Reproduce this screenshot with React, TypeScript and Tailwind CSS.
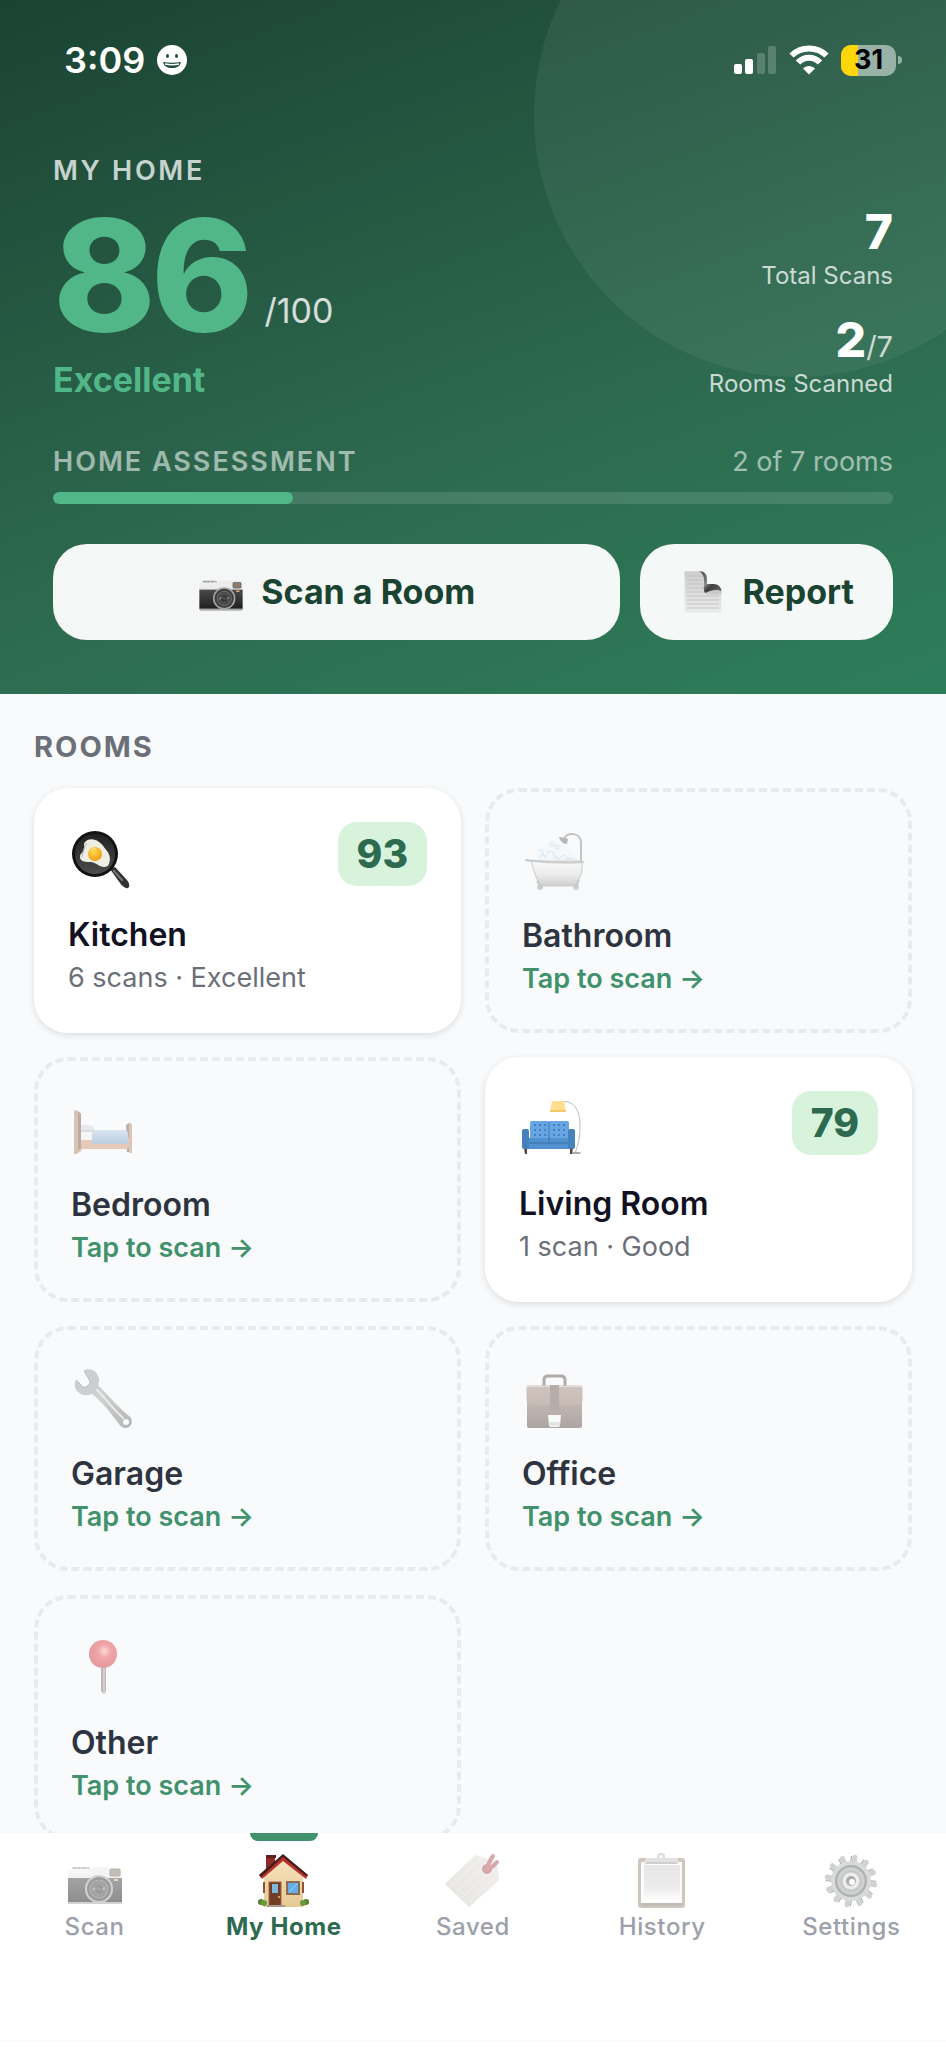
import type { ReactNode } from "react";

type IconProps = { className?: string };
type Icon = (props: IconProps) => ReactNode;

function CameraIcon({ className }: IconProps) {
  return (
    <svg viewBox="0 0 60 60" className={className} aria-hidden="true">
      <defs>
        <linearGradient id="camTop" x1="0" y1="0" x2="0" y2="1">
          <stop offset="0" stopColor="#f2f2f2" />
          <stop offset="1" stopColor="#c4c4c4" />
        </linearGradient>
        <linearGradient id="camBody" x1="0" y1="0" x2="0" y2="1">
          <stop offset="0" stopColor="#4a4a4a" />
          <stop offset="1" stopColor="#1f1f1f" />
        </linearGradient>
      </defs>
      <rect x="7" y="16" width="18" height="4" rx="1" fill="#b5b5b5" />
      <path d="M10 16v4M14 16v4M19 16v4" stroke="#777" strokeWidth="1" />
      <rect x="3" y="18" width="54" height="35" rx="2" fill="url(#camTop)" />
      <path d="M26 18l2-2h14l2 2v8H26z" fill="#ececec" />
      <rect x="3" y="27" width="54" height="24" fill="url(#camBody)" />
      <rect x="3" y="51" width="54" height="2" rx="1" fill="#a9a9a9" />
      <rect x="45" y="18" width="10" height="7" rx="1" fill="#8b7d6b" stroke="#666" strokeWidth="1" />
      <rect x="49" y="28" width="4" height="2" fill="#d9b46a" />
      <circle cx="34" cy="38" r="14" fill="#a6a6a6" />
      <circle cx="34" cy="38" r="12" fill="#3c3c3c" />
      <circle cx="34" cy="38" r="9" fill="#4c4c4c" stroke="#777" strokeWidth="1" />
      <path d="M28 39c2-2 4-3 6-1s4 0 6-1" stroke="#8f8f8f" strokeWidth="2" fill="none" />
      <circle cx="34" cy="38" r="4" fill="#2a2a2a" opacity=".6" />
    </svg>
  );
}

function PageIcon({ className }: IconProps) {
  return (
    <svg viewBox="0 0 60 60" className={className} aria-hidden="true">
      <defs>
        <linearGradient id="pageBg" x1="0" y1="0" x2="0" y2="1">
          <stop offset="0" stopColor="#cdcdcd" />
          <stop offset="1" stopColor="#ececec" />
        </linearGradient>
        <linearGradient id="pageFold" x1="0" y1="0" x2="1" y2="1">
          <stop offset="0" stopColor="#3a3a3a" />
          <stop offset=".45" stopColor="#8b8b8b" />
          <stop offset=".6" stopColor="#3f3f3f" />
          <stop offset="1" stopColor="#6a6a6a" />
        </linearGradient>
      </defs>
      <path d="M7 4h22c3 2 4 5 4 8v18h20v26H7z" fill="url(#pageBg)" />
      <path
        d="M10 10h19M10 15h20M10 20h20M10 25h21M10 30h24M10 35h40M10 40h40M10 45h40M10 50h40"
        stroke="#bcbcbc"
        strokeWidth="1"
      />
      <path d="M25 4c7 0 10 4 10 10v6h8c6 0 10 4 10 9-6-2-12-1-19 2-2 1-3-2-3-6 1-9 1-18-6-21z" fill="url(#pageFold)" />
      <path d="M34 31c7-4 13-4 19-2v4H34z" fill="#c9c9c9" />
    </svg>
  );
}

function PanIcon({ className }: IconProps) {
  return (
    <svg viewBox="0 0 64 64" className={className} aria-hidden="true">
      <defs>
        <radialGradient id="yolk" cx=".4" cy=".35" r=".7">
          <stop offset="0" stopColor="#ffd84a" />
          <stop offset="1" stopColor="#f29a12" />
        </radialGradient>
        <linearGradient id="panIn" x1="0" y1="0" x2="0" y2="1">
          <stop offset="0" stopColor="#222222" />
          <stop offset="1" stopColor="#4c4c4c" />
        </linearGradient>
      </defs>
      <path d="M42 43l5-2 11 12c4 4 4 8 2 9s-6-2-8-5z" fill="#333333" />
      <path d="M46 45l8 9" stroke="#777777" strokeWidth="2" strokeLinecap="round" />
      <circle cx="27" cy="28" r="23" fill="#121212" />
      <circle cx="27" cy="28" r="20" fill="url(#panIn)" />
      <path
        d="M17 16c4-4 10-3 14 0s4 4 8 9 3 10 2 13-5 4-9 2-6-4-11-4-9-1-9-5 3-4 4-7-1-6 1-8z"
        fill="#efeee2"
      />
      <path d="M14 31c1-6 2-10 5-14" stroke="#b5b3a5" strokeWidth="1" fill="none" />
      <circle cx="27" cy="28" r="7" fill="url(#yolk)" />
      <path d="M23 25c1-2 3-3 5-2" stroke="#fff1a8" strokeWidth="1" fill="none" strokeLinecap="round" />
    </svg>
  );
}

function BathIcon({ className }: IconProps) {
  return (
    <svg viewBox="0 0 64 64" className={className} aria-hidden="true">
      <defs>
        <linearGradient id="tub" x1="0" y1="0" x2="0" y2="1">
          <stop offset="0" stopColor="#f7f7f7" />
          <stop offset=".5" stopColor="#e2e2e2" />
          <stop offset="1" stopColor="#a5a5a5" />
        </linearGradient>
      </defs>
      <path d="M59 36V16c0-6-4-9-9-9-4 0-7 2-8 5" stroke="#909090" strokeWidth="2" fill="none" />
      <path d="M37 10c3 0 7 1 9 2l-1 5c-4 0-7-3-8-7z" fill="#777777" />
      <path d="M14 34c-1-6 3-12 9-14s7-4 12-4 9 3 12 7 8 5 9 12z" fill="#f2f8fc" />
      <g fill="none" stroke="#b2d3e6" strokeWidth="1">
        <path d="M15 23c3-1 6 1 6 4s3 3 4 0 4-4 6-1 1 6 5 6 3-5 6-4 2 5 6 4 5 1 7 2" />
        <path d="M18 31c0-4 5-4 6 0M31 32c0-4 5-4 6 0M44 33c1-3 5-3 6 0" />
        <circle cx="30" cy="17" r="2" />
        <circle cx="35" cy="20" r="2" />
      </g>
      <circle cx="18" cy="60" r="3" fill="#a5a5a5" />
      <circle cx="54" cy="60" r="3" fill="#a5a5a5" />
      <path d="M9 34h51c1 11-2 19-8 25H20C14 54 12 43 9 34z" fill="url(#tub)" stroke="#9c9c9c" strokeWidth="1" />
      <path d="M4 33c2 1 5 0 9 1 16 2 31 2 48 1" stroke="#9c9c9c" strokeWidth="2" fill="none" strokeLinecap="round" />
      <path d="M15 54l5 7M57 53l-4 8" stroke="#999999" strokeWidth="2" />
    </svg>
  );
}

function BedIcon({ className }: IconProps) {
  return (
    <svg viewBox="0 0 64 64" className={className} aria-hidden="true">
      <defs>
        <linearGradient id="blanket" x1="0" y1="0" x2="0" y2="1">
          <stop offset="0" stopColor="#b9d0e6" />
          <stop offset="1" stopColor="#7fa2c6" />
        </linearGradient>
      </defs>
      <path d="M55 29l3-2 3 1v28h-5z" fill="#86675b" />
      <path d="M8 42h50v9l-2 2H12l-4 4z" fill="#d39c7b" />
      <path d="M9 32h12l3 4h-1v8H9z" fill="#f3f3f6" />
      <path d="M9 29h8c4 0 6 2 7 5H9z" fill="#d7dae2" />
      <path d="M9 35h14" stroke="#848d9a" strokeWidth="1" />
      <path d="M27 34h26c3 0 4 2 4 5v9H21v-8c0-4 2-6 6-6z" fill="url(#blanket)" />
      <path d="M3 14l4 1 3 3v35l-4 5H3z" fill="#bd8d72" />
      <path d="M7 15l3 3v34l-3 2z" fill="#84604f" />
      <path d="M58 28h3v29h-3z" fill="#c39377" />
    </svg>
  );
}

function SofaIcon({ className }: IconProps) {
  const tufts = [16, 21, 26, 35, 40, 45];
  return (
    <svg viewBox="0 0 64 64" className={className} aria-hidden="true">
      <path d="M43 7c11-2 18 7 18 24 0 12-2 20-5 27" stroke="#b9bcc0" strokeWidth="1" fill="none" />
      <ellipse cx="57" cy="58" rx="5" ry="1" fill="#a5a5a5" />
      <path d="M33 6h12l2 11H31z" fill="#ffdf8e" />
      <path d="M31 15h16v2H31z" fill="#f3c766" />
      <path d="M5 53h3v6H6zM51 53h3l-1 6h-2z" fill="#5b4034" />
      <rect x="11" y="26" width="20" height="20" rx="2" fill="#67a5e3" />
      <rect x="30" y="26" width="20" height="20" rx="2" fill="#67a5e3" />
      <path d="M30 27v18" stroke="#3f7ab5" strokeWidth="1" />
      {[30, 35, 40].map((y) => tufts.map((x) => <circle key={`${x}-${y}`} cx={x} cy={y} r="1" fill="#3673b3" />))}
      <rect x="8" y="43" width="45" height="11" fill="#5191d0" />
      <path d="M8 48h45M30 43v5" stroke="#386fa8" strokeWidth="1" />
      <rect x="3" y="34" width="7" height="20" rx="2" fill="#4581bd" />
      <rect x="49" y="34" width="7" height="20" rx="2" fill="#4581bd" />
    </svg>
  );
}

function WrenchIcon({ className }: IconProps) {
  return (
    <svg viewBox="0 0 64 64" className={className} aria-hidden="true">
      <defs>
        <linearGradient id="steel" x1="0" y1="0" x2="1" y2="1">
          <stop offset="0" stopColor="#9ba6b0" />
          <stop offset=".5" stopColor="#a5a5a5" />
          <stop offset="1" stopColor="#6f6f6f" />
        </linearGradient>
      </defs>
      <path
        fillRule="evenodd"
        d="M13 5c6-2 12 0 14 6 2 4 1 7 0 9 9 9 18 20 31 31 5 4 3 11-3 12-3 0-5-1-7-4C39 47 31 37 21 29c-4 2-10 2-14-2-4-4-4-8-2-12l7 7c3 1 7-2 7-6zM55 54a3 3 0 1 0 0 6 3 3 0 0 0 0-6z"
        fill="url(#steel)"
      />
      <path d="M26 25c9 9 16 19 26 28" stroke="#dddddd" strokeWidth="2" fill="none" strokeLinecap="round" />
      <path d="M5 15l7 7c3 1 7-2 7-6l-6-10" stroke="#6f7d88" strokeWidth="1" fill="none" />
    </svg>
  );
}

function BriefcaseIcon({ className }: IconProps) {
  return (
    <svg viewBox="0 0 64 64" className={className} aria-hidden="true">
      <defs>
        <linearGradient id="leather" x1="0" y1="0" x2="0" y2="1">
          <stop offset="0" stopColor="#a68f80" />
          <stop offset="1" stopColor="#65534d" />
        </linearGradient>
      </defs>
      <path d="M22 21v-6c0-3 2-4 4-4h13c2 0 4 1 4 4v6" stroke="#6f5d57" strokeWidth="3" fill="none" />
      <rect x="5" y="22" width="55" height="41" rx="2" fill="url(#leather)" />
      <path d="M4 22c0-1 1-2 2-2h53c1 0 2 1 2 2v14c-2 3-6 4-9 4H13c-3 0-7-1-9-4z" fill="#a38d7d" opacity=".5" />
      <path d="M28 20h9v27h-9z" fill="#766159" />
      <path d="M24 46h18v5H24z" fill="#7b6960" />
      <path d="M26 50h13l-1 10c0 1-1 2-2 2h-7c-1 0-2-1-2-2z" fill="#fafafa" />
      <path d="M27 57h11v4H28z" fill="#cfcfcf" />
    </svg>
  );
}

function PinIcon({ className }: IconProps) {
  return (
    <svg viewBox="0 0 64 64" className={className} aria-hidden="true">
      <defs>
        <radialGradient id="pinBall" cx=".55" cy=".4" r=".6">
          <stop offset="0" stopColor="#ffb9b5" />
          <stop offset=".4" stopColor="#ea5558" />
          <stop offset="1" stopColor="#cd3c42" />
        </radialGradient>
      </defs>
      <path d="M30 31h5v26l-2 3-3-3z" fill="#857979" />
      <path d="M33 33v25" stroke="#d6d0d0" strokeWidth="1" />
      <circle cx="32" cy="20" r="14" fill="url(#pinBall)" />
    </svg>
  );
}

function HouseIcon({ className }: IconProps) {
  return (
    <svg viewBox="0 0 60 60" className={className} aria-hidden="true">
      <defs>
        <linearGradient id="wall" x1="0" y1="0" x2="0" y2="1">
          <stop offset="0" stopColor="#f8e2bd" />
          <stop offset="1" stopColor="#e6c995" />
        </linearGradient>
      </defs>
      <rect x="12" y="5" width="9" height="16" fill="#8e2a27" />
      <rect x="12" y="4" width="10" height="3" fill="#611c1b" />
      <path d="M10 24L29 8l20 16v32H10z" fill="url(#wall)" />
      <path d="M29 4l25 20-2 4L29 10 8 28l-3-4z" fill="#b8322e" />
      <path d="M5 24L29 3l25 21-2 1L29 6 7 26z" fill="#421f1d" />
      <rect x="15" y="31" width="12" height="24" fill="#713d24" stroke="#9a6a43" strokeWidth="1" />
      <rect x="18" y="33" width="6" height="9" fill="#7db8df" />
      <circle cx="25" cy="46" r="1" fill="#f0c36a" />
      <rect x="33" y="31" width="12" height="12" fill="#62aee5" stroke="#8c6b4e" strokeWidth="2" />
      <path d="M35 41l8-8" stroke="#9cd0f2" strokeWidth="1" />
      <path d="M9 31h2v11H9zM48 31h2v11h-2z" fill="#8a5636" />
      <circle cx="7" cy="51" r="3" fill="#54812d" />
      <circle cx="10" cy="52" r="3" fill="#6b9a3a" />
      <circle cx="52" cy="51" r="3" fill="#54812d" />
      <circle cx="49" cy="52" r="3" fill="#6b9a3a" />
      <rect x="13" y="54" width="18" height="2" fill="#a49a91" />
    </svg>
  );
}

function TagIcon({ className }: IconProps) {
  return (
    <svg viewBox="0 0 60 60" className={className} aria-hidden="true">
      <defs>
        <linearGradient id="tagBg" x1="0" y1="1" x2="1" y2="0">
          <stop offset="0" stopColor="#cfcbc6" />
          <stop offset="1" stopColor="#e6e3de" />
        </linearGradient>
      </defs>
      <path d="M2 33L31 5c1-1 3-1 5 0l15 5c2 1 3 2 3 4l2 12c0 2 0 3-1 4L26 56z" fill="url(#tagBg)" />
      <path d="M8 35l24-23M14 40l26-25M20 46l26-25M26 51l22-21" stroke="#fff" strokeWidth="1" opacity=".4" />
      <circle cx="44" cy="18" r="5" fill="#a94f54" />
      <path d="M44 18c1-5 3-9 6-13M44 18c4-1 7-3 10-7" stroke="#b0565a" strokeWidth="4" fill="none" strokeLinecap="round" />
    </svg>
  );
}

function ClipboardIcon({ className }: IconProps) {
  return (
    <svg viewBox="0 0 60 60" className={className} aria-hidden="true">
      <defs>
        <linearGradient id="sheet" x1="0" y1="0" x2="0" y2="1">
          <stop offset="0" stopColor="#cfcfcf" />
          <stop offset=".6" stopColor="#dadada" />
          <stop offset="1" stopColor="#ffffff" />
        </linearGradient>
      </defs>
      <rect x="6" y="7" width="47" height="50" rx="3" fill="#a08f7c" />
      <rect x="9" y="11" width="41" height="42" fill="#fafafa" />
      <rect x="12" y="14" width="36" height="36" fill="url(#sheet)" />
      <path d="M9 52h41v3H9z" fill="#877c74" />
      <circle cx="29" cy="6" r="3" fill="none" stroke="#b5b5b5" strokeWidth="2" />
      <path d="M14 7h31l2 4c0 1-1 2-3 2H15c-2 0-3-1-3-2z" fill="#c6c6c6" />
      <path d="M14 12h31" stroke="#7d7d7d" strokeWidth="1" />
    </svg>
  );
}

function GearIcon({ className }: IconProps) {
  const teeth = [8, 38, 68, 98, 128, 158, 188, 218, 248, 278, 308, 338];
  return (
    <svg viewBox="0 0 60 60" className={className} aria-hidden="true">
      {teeth.map((a) => (
        <g key={a} transform={`rotate(${a} 30 30)`}>
          <path d="M27 13l1-8c1-2 4-2 5 0v8z" fill="#a5a7a8" />
          <path d="M27 12V5" stroke="#4f5254" strokeWidth="1" />
        </g>
      ))}
      <circle cx="30" cy="30" r="20" fill="#b5b8b9" />
      <circle cx="30" cy="30" r="15" fill="#8f9294" stroke="#5f6264" strokeWidth="2" />
      <circle cx="30" cy="30" r="12" fill="none" stroke="#a5a8a9" strokeWidth="2" />
      <circle cx="30" cy="30" r="9" fill="#dcdddd" stroke="#8f9294" strokeWidth="1" />
      <circle cx="30" cy="30" r="5" fill="#5c5f61" />
      <circle cx="31" cy="31" r="3" fill="#fff" />
    </svg>
  );
}

type Room = { name: string; icon: Icon; score?: number; detail?: string };

const rooms: Room[] = [
  { name: "Kitchen", icon: PanIcon, score: 93, detail: "6 scans · Excellent" },
  { name: "Bathroom", icon: BathIcon },
  { name: "Bedroom", icon: BedIcon },
  { name: "Living Room", icon: SofaIcon, score: 79, detail: "1 scan · Good" },
  { name: "Garage", icon: WrenchIcon },
  { name: "Office", icon: BriefcaseIcon },
  { name: "Other", icon: PinIcon },
];

const tabs: { label: string; icon: Icon; active?: boolean }[] = [
  { label: "Scan", icon: CameraIcon },
  { label: "My Home", icon: HouseIcon, active: true },
  { label: "Saved", icon: TagIcon },
  { label: "History", icon: ClipboardIcon },
  { label: "Settings", icon: GearIcon },
];

function StatusBar() {
  return (
    <div className="relative flex h-[120px] items-center justify-between pr-[44px] pl-16">
      <div className="flex items-center gap-3">
        <span className="text-[36px] leading-10 font-semibold">3:09</span>
        <svg viewBox="0 0 30 30" className="size-[30px]" aria-hidden="true">
          <circle cx="15" cy="15" r="15" fill="#fff" />
          <ellipse cx="10.500" cy="11" rx="1.500" ry="2" fill="#1f4d3b" />
          <ellipse cx="19.500" cy="11" rx="1.500" ry="2" fill="#1f4d3b" />
          <path d="M6 17c6 1 12 1 18 0-1 4-4 6-9 6s-8-2-9-6z" fill="#1f4d3b" />
          <path d="M8 19c5 1 9 1 14 0" stroke="#fff" strokeWidth="1.500" fill="none" />
        </svg>
      </div>
      <div className="flex items-center gap-3">
        <svg viewBox="0 0 43 30" className="h-[30px] w-[43px]" aria-hidden="true">
          <rect x="0" y="19" width="8" height="10" rx="2" fill="#fff" />
          <rect x="11" y="14" width="8" height="15" rx="2" fill="#fff" />
          <rect x="23" y="8" width="8" height="21" rx="2" fill="#fff" opacity=".2" />
          <rect x="34" y="1" width="8" height="28" rx="2" fill="#fff" opacity=".2" />
        </svg>
        <svg viewBox="0 0 40 30" className="h-[30px] w-10" aria-hidden="true">
          <path d="M2.500 10.500C12 1 28 1 37.500 10.500" stroke="#fff" strokeWidth="6" fill="none" />
          <path d="M9 17.500c6-6.500 16-6.500 22 0" stroke="#fff" strokeWidth="6" fill="none" />
          <path d="M14 23.500c3.500-3.500 8.500-3.500 12 0L20 29.500z" fill="#fff" />
        </svg>
        <div className="flex items-center gap-0.5">
          <div className="relative flex h-[31px] w-[55px] items-center justify-center overflow-hidden rounded-[10px] bg-white/50">
            <div className="absolute inset-y-0 left-0 w-[31%] bg-[#ffd60a]" />
            <span className="relative text-[27px] leading-8 font-bold text-black">31</span>
          </div>
          <div className="h-2 w-1 rounded-r-full bg-white/50" />
        </div>
      </div>
    </div>
  );
}

function Header() {
  return (
    <header className="relative shrink-0 overflow-hidden bg-[linear-gradient(160deg,#1b4332_0%,#2d6a4f_60%,#2d7d5a_100%)] text-white">
      <div className="absolute -top-[147px] -right-[112px] size-[524px] rounded-full bg-white/6" />
      <StatusBar />
      <div className="relative px-[53px] pt-[33px] pb-[54px]">
        <div className="flex items-end justify-between">
          <div>
            <p className="text-[27px] leading-9 font-semibold tracking-widest text-white/75">MY HOME</p>
            <div className="mt-2 flex items-end gap-4">
              <span className="text-[155px] leading-[155px] font-extrabold tracking-[-5px] text-[#52b788]">86</span>
              <span className="mb-4 text-[34px] leading-[50px] text-white/80">/100</span>
            </div>
            <p className="mt-2 text-[34px] leading-10 font-bold text-[#52b788]">Excellent</p>
          </div>
          <div className="text-right">
            <p className="text-[48px] leading-12 font-extrabold">7</p>
            <p className="mt-1 text-[24px] leading-8 text-white/75">Total Scans</p>
            <p className="mt-6 text-[48px] leading-12 font-extrabold">
              2<span className="text-[29px] leading-none font-normal text-white/75">/7</span>
            </p>
            <p className="mt-1 text-[24px] leading-8 text-white/75">Rooms Scanned</p>
          </div>
        </div>

        <div className="mt-11 flex items-center justify-between text-[27px] leading-9">
          <h2 className="font-semibold tracking-[2px] text-white/55">HOME ASSESSMENT</h2>
          <span className="text-white/55">2 of 7 rooms</span>
        </div>
        <div className="mt-3 h-3 overflow-hidden rounded-full bg-white/12">
          <div className="h-full w-2/7 rounded-full bg-[#52b788]" />
        </div>

        <div className="mt-10 flex gap-5 text-[34px] leading-10 font-bold text-[#1b4332]">
          <button type="button" className="flex flex-1 items-center justify-center gap-4 rounded-[34px] bg-white/95 py-7">
            <CameraIcon className="-my-1 size-12" />
            Scan a Room
          </button>
          <button type="button" className="flex items-center gap-4 rounded-[34px] bg-white/95 px-[39px] py-7">
            <PageIcon className="-my-1 size-12" />
            Report
          </button>
        </div>
      </div>
    </header>
  );
}

function RoomCard({ name, icon: RoomIcon, score, detail }: Room) {
  if (score === undefined) {
    return (
      <button type="button" className="block rounded-[34px] border-4 border-dashed border-[#e8eaec] px-[33px] py-[31px] text-left">
        <span className="flex h-[72px] items-center">
          <RoomIcon className="size-16 opacity-50" />
        </span>
        <span className="mt-[21px] block text-[32px] leading-10 font-semibold text-[#2d3440]">{name}</span>
        <span className="mt-1 block text-[27px] leading-[38px] font-semibold text-[#40916c]">Tap to scan →</span>
      </button>
    );
  }
  return (
    <button type="button" className="flex flex-col rounded-[34px] bg-white p-[34px] text-left shadow-[0_2px_7px_rgba(0,0,0,0.12)]">
      <span className="flex h-[72px] w-full items-center justify-between">
        <RoomIcon className="size-16" />
        <span className="self-start rounded-[19px] bg-[#d8f3dc] px-[19px] py-3 text-[39px] leading-10 font-extrabold text-[#2d6a4f]">
          {score}
        </span>
      </span>
      <span className="mt-[21px] text-[32px] leading-10 font-semibold text-[#111122]">{name}</span>
      <span className="mt-1 text-[27px] leading-[38px] text-[#6b7078]">{detail}</span>
    </button>
  );
}

export default function App() {
  return (
    <div className="flex h-screen flex-col overflow-hidden bg-[#f9fafb] font-['Inter',sans-serif]">
      <main className="flex min-h-0 flex-1 flex-col overflow-y-auto [scrollbar-width:none]">
        <Header />
        <section className="px-[34px] pt-[34px] pb-6">
          <h2 className="text-[29px] leading-[38px] font-bold tracking-[2px] text-[#6b7078]">ROOMS</h2>
          <div className="mt-[22px] grid grid-cols-2 gap-6">
            {rooms.map((room) => (
              <RoomCard key={room.name} {...room} />
            ))}
          </div>
        </section>
      </main>

      <nav className="shrink-0 bg-white">
        <div className="grid grid-cols-5 pb-[97px]">
          {tabs.map(({ label, icon: TabIcon, active }) => (
            <a key={label} href="#" aria-current={active ? "page" : undefined} className="relative flex flex-col items-center pt-[18px]">
              {active && <span className="absolute top-0 h-2 w-[68px] rounded-b-lg bg-[#40916c]" />}
              <TabIcon className={active ? "size-[60px]" : "size-[60px] opacity-50"} />
              <span
                className={
                  active
                    ? "text-[24px] leading-8 font-bold tracking-wide text-[#2d6a4f]"
                    : "text-[24px] leading-8 font-medium tracking-wide text-[#9ca0aa]"
                }
              >
                {label}
              </span>
            </a>
          ))}
        </div>
        <div className="h-[7px] border-t border-gray-50" />
      </nav>
    </div>
  );
}
